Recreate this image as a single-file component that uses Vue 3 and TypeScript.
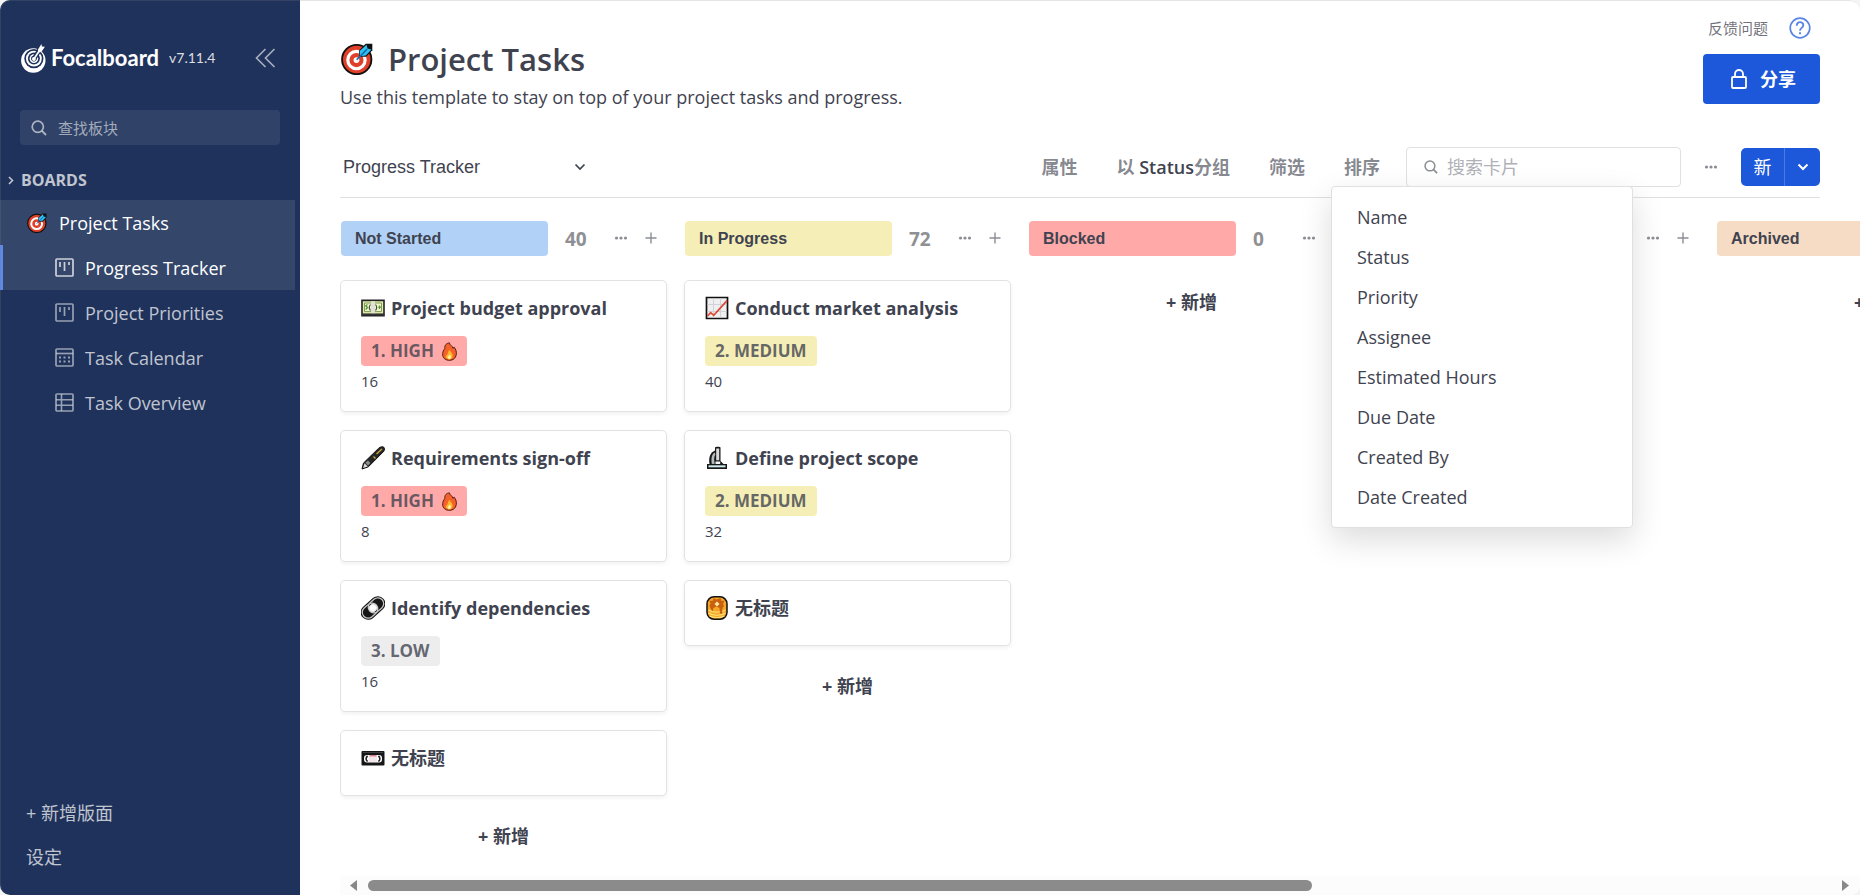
<script setup lang="ts">
import { ref } from 'vue'

type ViewKind = 'board' | 'calendar' | 'table'
interface View { name: string; kind: ViewKind }
interface Badge { text: string; tone: string; fire?: boolean }
interface Card { icon: string; title: string; badge?: Badge; hours?: number }
interface Column { name: string; tone: string; total: number; cards: Card[] }

const views: View[] = [
  { name: 'Progress Tracker', kind: 'board' },
  { name: 'Project Priorities', kind: 'board' },
  { name: 'Task Calendar', kind: 'calendar' },
  { name: 'Task Overview', kind: 'table' },
]
const activeView = ref(0)
const viewName = ref('Progress Tracker')
const boardQuery = ref('')
const cardQuery = ref('')
const sortOpen = ref(true)

const sortFields: string[] = [
  'Name', 'Status', 'Priority', 'Assignee',
  'Estimated Hours', 'Due Date', 'Created By', 'Date Created',
]

const high: Badge = { text: '1. HIGH', tone: 'red', fire: true }
const medium: Badge = { text: '2. MEDIUM', tone: 'yellow' }
const low: Badge = { text: '3. LOW', tone: 'gray' }

const columns: Column[] = [
  {
    name: 'Not Started', tone: 'blue', total: 40,
    cards: [
      { icon: 'money', title: 'Project budget approval', badge: high, hours: 16 },
      { icon: 'pen', title: 'Requirements sign-off', badge: high, hours: 8 },
      { icon: 'link', title: 'Identify dependencies', badge: low, hours: 16 },
      { icon: 'tape', title: '无标题' },
    ],
  },
  {
    name: 'In Progress', tone: 'yellow', total: 72,
    cards: [
      { icon: 'chart', title: 'Conduct market analysis', badge: medium, hours: 40 },
      { icon: 'scope', title: 'Define project scope', badge: medium, hours: 32 },
      { icon: 'pancakes', title: '无标题' },
    ],
  },
  { name: 'Blocked', tone: 'red', total: 0, cards: [] },
  { name: 'Completed', tone: 'green', total: 0, cards: [] },
  { name: 'Archived', tone: 'orange', total: 0, cards: [] },
]
</script>

<template>
  <div class="app">
    <svg class="sprite" width="0" height="0" aria-hidden="true">
      <symbol id="i-target" viewBox="0 0 24 24">
        <circle cx="11.8" cy="12.4" r="11" fill="#e0402a" stroke="#111" stroke-width="1.4" />
        <circle cx="11.6" cy="12.8" r="6.5" fill="none" stroke="#fff" stroke-width="2.4" />
        <circle cx="11.6" cy="12.8" r="2.2" fill="#fff" />
        <path d="M13.500 9.500V5.600L18.500.500h5v5L18.800 10.400h-3.600z" fill="#111" />
        <path d="M14 9.300V6l5.200-4.600.6 2.800 3 .7-4.200 4.400-3 .4z" fill="#2fc0f5" />
        <path d="M11.800 12.600l7.800-8" stroke="#0f6fae" stroke-width="1.200" />
      </symbol>
      <symbol id="i-money" viewBox="0 0 24 24">
        <path d="M1 4.400h22v15.400H1z" fill="#e4efae" stroke="#222" stroke-width="1.600" />
        <path d="M1 18.400h22" stroke="#333" stroke-width="2" />
        <path d="M3.500 7h17v8.600h-17z" fill="#f1f7c4" stroke="#7f9b56" />
        <path d="M10 5.200h4v12h-4z" fill="#dfe2d6" />
        <path d="M9.500 8.500c-1.600 2-1.600 4 0 6M14.500 8.500c1.600 2 1.600 4 0 6" stroke="#4a4a4a" stroke-width="1.200" fill="none" />
        <path d="M6.500 8.500l-1.800 1.300 1.800 1.700-1.800 2M18.500 9.500v3.600M17.300 11.200h2.600" stroke="#50923f" stroke-width="1.200" fill="none" />
      </symbol>
      <symbol id="i-pen" viewBox="0 0 24 24">
        <path d="M1 23l1.500-6L17.500 2.400C19 .6 22 .4 23 1.400s.8 2.800-.6 4.300L7.400 20.800z" fill="#262626" stroke="#111" />
        <path d="M2 22l1.600-4.700 3.200 3.200z" fill="#dcdcdc" />
        <path d="M4.400 16.800L7 14.400l2.400 2.500-2.400 2.500" fill="#8b8f8b" />
        <path d="M12.500 10.500l2 2M15.500 8L21 3" stroke="#d1a243" stroke-width="1.400" />
      </symbol>
      <symbol id="i-link" viewBox="0 0 24 24">
        <g transform="rotate(-42 12 12)" fill="#161616">
          <rect x="-2" y="4.500" width="28" height="15" rx="7.500" />
          <rect x="-.4" y="6.200" width="16.800" height="11.600" rx="5.800" fill="none" stroke="#c5c5c5" stroke-width="1.300" />
          <rect x="7.600" y="6.200" width="16.800" height="11.600" rx="5.800" fill="none" stroke="#c5c5c5" stroke-width="1.300" />
          <circle cx="12" cy="12" r="3.500" fill="#fff" stroke="#eee" />
        </g>
      </symbol>
      <symbol id="i-tape" viewBox="0 0 24 24">
        <rect x=".5" y="5" width="23" height="14.500" rx="1" fill="#161616" />
        <path d="M2 6.500h20" stroke="#404040" />
        <rect x="3" y="9" width="18" height="7.500" rx="3" fill="#fff" />
        <rect x="8" y="9.400" width="8" height="6.600" fill="#f4e6ea" />
        <path d="M8.500 9.800h7" stroke="#cb4f63" />
        <path d="M6.600 10c-2 1.500-2 4 0 5.500M17.400 10c2 1.500 2 4 0 5.500" fill="none" stroke="#222" stroke-width="1.600" />
      </symbol>
      <symbol id="i-chart" viewBox="0 0 24 24">
        <path d="M1.500 1.500h21v21h-21z" fill="#efeff1" stroke="#111" stroke-width="1.700" />
        <path d="M8.500 2.500v19M15.500 2.500v19M2.500 8.500h19M2.500 15.500h19" stroke="#d2d2d8" />
        <path d="M2.500 20l3.200-3.400 3 2.800L22 4.600" fill="none" stroke="#dc4a35" stroke-width="1.700" />
      </symbol>
      <symbol id="i-scope" viewBox="0 0 24 24">
        <path d="M2 18h2.500C3.500 12 5 6.500 10 4.500V1.500C10 .6 15.500.4 15.500 1.500V15l3 3H22v5H2z" fill="#181818" />
        <path d="M11.200 2.500h3v11.800h-3z" fill="#dadada" />
        <path d="M9.700 6.500C6.700 8.500 6 12 6.800 18l3-.2c-1-4-.8-7 .6-9.200z" fill="#b7bcbd" />
        <path d="M10.500 15.500h4.700v2.500h-4.700z" fill="#f2f5f5" />
        <path d="M3.500 19.300h17v2H3.500z" fill="#cdeaf0" />
      </symbol>
      <symbol id="i-pancakes" viewBox="0 0 24 24">
        <rect x="2" y=".8" width="20" height="22.400" rx="7" fill="#f4a725" stroke="#111" stroke-width="1.500" />
        <path d="M3.500 14c4 3 13 3 17 0M3.500 17c4 3 13 3 17 0M4.500 20c4 2 11 2 15 0" stroke="#ffe077" stroke-width="1.200" fill="none" />
        <path d="M4.500 4.500l3 .5 1-3 3 1.500 4-1.500 1 3 3-.5-1.500 3.500 1 2-1.500 2-.5 6-2-.5-.5-5.500-3-1.500-3 1.500-1 3.500-2-3-1-3 1-2z" fill="#c9600f" />
        <path d="M12 5.500l2.500 2.500-2.500 2.500L9.500 8z" fill="#ffe9a0" />
      </symbol>
      <symbol id="i-fire" viewBox="0 0 16 20">
        <path d="M3 7C2.500 3 5 1 8 .8c-.6 2 3.400 3 3.600 5.700L13 5.400c4 5 2.400 11-1 13-3 1.600-7 1.300-9.300-.7C-.2 15 .2 10 3 7z" fill="#f4622a" stroke="#4a1a10" />
        <path d="M8.200 8c.8 2.500 2.400 3 3 5.200.8 3-1 5.200-3.200 5.200S3.500 16.800 4 14c1 .8 1.600 0 1.900-1.600C6.300 10.700 7 9 8.200 8z" fill="#ffb52e" />
        <path d="M8.500 13c1.300 1.800 1.700 5-.5 5s-2.400-2.200-1-3.200z" fill="#fff2a0" />
      </symbol>
      <symbol id="i-dots" viewBox="0 0 14 14">
        <circle cx="2.500" cy="7" r="1.600" /><circle cx="7" cy="7" r="1.600" /><circle cx="11.500" cy="7" r="1.600" />
      </symbol>
      <symbol id="i-search" viewBox="0 0 16 16">
        <circle cx="6.800" cy="6.800" r="5.600" fill="none" stroke="currentColor" stroke-width="1.700" />
        <path d="M10.900 10.900l4.100 4.100" stroke="currentColor" stroke-width="1.900" />
      </symbol>
      <symbol id="i-board" viewBox="0 0 19 19">
        <rect x="1" y="1" width="17" height="17" rx="1" fill="none" stroke="currentColor" stroke-width="1.700" />
        <path d="M5 4v5M9.500 4v9M14 4v3" stroke="currentColor" stroke-width="1.700" />
      </symbol>
      <symbol id="i-calendar" viewBox="0 0 19 19">
        <rect x="1" y="1" width="17" height="17" rx="1" fill="none" stroke="currentColor" stroke-width="1.700" />
        <path d="M1 5.500h17" stroke="currentColor" stroke-width="1.700" />
        <path d="M4 9.500h11M4 13.500h11" stroke="currentColor" stroke-width="2" stroke-dasharray="2 2.500" />
      </symbol>
      <symbol id="i-table" viewBox="0 0 19 19">
        <rect x="1" y="1" width="17" height="17" rx="1" fill="none" stroke="currentColor" stroke-width="1.700" />
        <path d="M1 6.700h17M1 12.300h17M6.500 1v17" stroke="currentColor" stroke-width="1.600" />
      </symbol>
    </svg>

    <aside class="sidebar">
      <header class="brand">
        <svg class="brand-mark" viewBox="0 0 25 29" aria-hidden="true">
          <circle cx="12.300" cy="16.500" r="12.200" fill="#fff" />
          <circle cx="12.900" cy="14.600" r="9.600" fill="#1f325b" />
          <circle cx="12.900" cy="14.600" r="7.900" fill="#fff" />
          <circle cx="12.900" cy="14.600" r="6" fill="#1f325b" />
          <circle cx="12.900" cy="14.600" r="4.300" fill="#fff" />
          <circle cx="12.900" cy="14.600" r="2.800" fill="#1f325b" />
          <path d="M12.900 15L20 3.500" stroke="#1f325b" stroke-width="4.600" />
          <circle cx="12.900" cy="15" r="1.900" fill="#fff" />
          <path d="M12.900 15L20.200 4" stroke="#fff" stroke-width="1.700" />
          <path d="M17 5.500L20.400 0l.5 2.600 3 .2L20.300 8l-3 .4z" fill="#fff" />
        </svg>
        <span class="brand-name">Focalboard</span>
        <span class="brand-version">v7.11.4</span>
        <button class="collapse" type="button" aria-label="Collapse sidebar">
          <svg width="21" height="20" viewBox="0 0 21 20" fill="none" stroke="currentColor" stroke-width="1.700">
            <path d="M10.500 1L1.500 10l9 9M19.500 1l-9 9 9 9" />
          </svg>
        </button>
      </header>

      <label class="find">
        <svg width="16" height="16" aria-hidden="true"><use href="#i-search" /></svg>
        <input v-model="boardQuery" type="text" placeholder="查找板块" aria-label="查找板块">
      </label>

      <button class="category" type="button">
        <svg width="6" height="9" viewBox="0 0 6 9" fill="none" stroke="currentColor" stroke-width="1.600"><path d="M1 1l3.500 3.500L1 8" /></svg>
        BOARDS
      </button>

      <nav class="tree">
        <a class="tree-board" href="#board">
          <svg width="20" height="20" aria-hidden="true"><use href="#i-target" /></svg>
          Project Tasks
        </a>
        <a
          v-for="(view, i) in views" :key="view.name" href="#view"
          class="tree-view" :class="{ active: i === activeView }"
          @click.prevent="activeView = i"
        >
          <svg width="19" height="19" aria-hidden="true"><use :href="'#i-' + view.kind" /></svg>
          {{ view.name }}
        </a>
      </nav>

      <footer class="side-foot">
        <button type="button">+ 新增版面</button>
        <button type="button">设定</button>
      </footer>
    </aside>

    <main class="main">
      <header class="top">
        <div class="heading">
          <h1>
            <svg width="32" height="32" aria-hidden="true"><use href="#i-target" /></svg>
            Project Tasks
          </h1>
          <p>Use this template to stay on top of your project tasks and progress.</p>
        </div>
        <div class="top-side">
          <div class="feedback">
            <a href="#feedback">反馈问题</a>
            <button type="button" aria-label="Help">
              <svg width="22" height="22" viewBox="0 0 22 22" fill="none" stroke="currentColor">
                <circle cx="11" cy="11" r="9.800" stroke-width="1.700" />
                <path d="M7.700 8.800C7.700 3.700 14.400 4.300 14.300 8.300c0 2.600-3.300 2.600-3.300 5.400" stroke-width="1.900" />
                <path d="M11 15.300v2" stroke-width="2" />
              </svg>
            </button>
          </div>
          <button class="share" type="button">
            <svg width="16" height="20" viewBox="0 0 16 20" fill="none" stroke="currentColor" stroke-width="1.800">
              <rect x="1" y="8" width="14" height="11" rx="1" />
              <path d="M4 8V5a4 4 0 0 1 8 0v3" />
            </svg>
            分享
          </button>
        </div>
      </header>

      <div class="toolbar">
        <div class="view-select">
          <input v-model="viewName" type="text" aria-label="View name">
          <button type="button" aria-label="Views">
            <svg width="12" height="8" viewBox="0 0 12 8" fill="none" stroke="currentColor" stroke-width="1.700"><path d="M1.500 1.500L6 6l4.500-4.500" /></svg>
          </button>
        </div>
        <div class="actions">
          <button class="action" type="button">属性</button>
          <button class="action" type="button">以 <b>Status</b>分组</button>
          <button class="action" type="button">筛选</button>
          <div class="sort">
            <button class="action" type="button" :aria-expanded="sortOpen" @click="sortOpen = !sortOpen">排序</button>
            <div v-if="sortOpen" class="menu" role="menu">
              <button v-for="field in sortFields" :key="field" type="button" role="menuitem">{{ field }}</button>
            </div>
          </div>
        </div>
        <label class="card-search">
          <svg width="14" height="14" aria-hidden="true"><use href="#i-search" /></svg>
          <input v-model="cardQuery" type="text" placeholder="搜索卡片" aria-label="搜索卡片">
        </label>
        <button class="more" type="button" aria-label="View options">
          <svg width="14" height="14"><use href="#i-dots" /></svg>
        </button>
        <div class="new">
          <button type="button">新</button>
          <button type="button" aria-label="Templates">
            <svg width="12" height="8" viewBox="0 0 12 8" fill="none" stroke="currentColor" stroke-width="2"><path d="M1.500 1.500L6 6l4.500-4.500" /></svg>
          </button>
        </div>
      </div>

      <div class="board">
        <section v-for="column in columns" :key="column.name" class="column">
          <header class="column-head">
            <h2 :class="column.tone">{{ column.name }}</h2>
            <span class="total">{{ column.total }}</span>
            <button type="button" aria-label="Column options">
              <svg width="14" height="14"><use href="#i-dots" /></svg>
            </button>
            <button type="button" aria-label="Add card">
              <svg width="12" height="12" viewBox="0 0 12 12" stroke="currentColor" stroke-width="1.400"><path d="M6 .5v11M.5 6h11" /></svg>
            </button>
          </header>
          <article v-for="(card, i) in column.cards" :key="i" class="card">
            <h3>
              <svg width="24" height="24" aria-hidden="true"><use :href="'#i-' + card.icon" /></svg>
              {{ card.title }}
            </h3>
            <div v-if="card.badge" class="props">
              <span class="badge" :class="card.badge.tone">
                {{ card.badge.text }}
                <svg v-if="card.badge.fire" width="15" height="19" aria-hidden="true"><use href="#i-fire" /></svg>
              </span>
              <span class="hours">{{ card.hours }}</span>
            </div>
          </article>
          <button class="add" type="button">+ 新增</button>
        </section>
      </div>

      <div class="scrollbar" aria-hidden="true">
        <svg width="7" height="11" viewBox="0 0 7 11"><path d="M7 0v11L0 5.500z" /></svg>
        <div class="track"><div class="thumb"></div></div>
        <svg width="7" height="11" viewBox="0 0 7 11"><path d="M0 0v11l7-5.500z" /></svg>
      </div>
    </main>
  </div>
</template>

<style>
html,
body {
  background: #f4f4f4;
}
</style>

<style scoped>
* {
  box-sizing: border-box;
}

button,
input {
  border: 0;
  padding: 0;
  margin: 0;
  background: none;
  color: inherit;
  font: inherit;
}

button {
  cursor: pointer;
}

a {
  color: inherit;
  text-decoration: none;
}

svg {
  flex: none;
  display: block;
}

.sprite {
  position: absolute;
}

.app {
  position: relative;
  display: flex;
  height: 100vh;
  overflow: hidden;
  border-radius: 10px;
  background: #fff;
  color: #3f4350;
  font: 18px/24px "Open Sans", "Noto Sans CJK SC", sans-serif;
}

/* window edge */
.app::after {
  content: "";
  position: absolute;
  inset: 0;
  border: solid rgba(130, 130, 130, 0.2);
  border-width: 1px 0 0 1px;
  border-radius: 10px;
  pointer-events: none;
}

.sidebar {
  flex: none;
  display: flex;
  flex-direction: column;
  width: 300px;
  background: #1f325b;
  color: rgba(255, 255, 255, 0.72);
}

.brand {
  display: flex;
  align-items: center;
  height: 110px;
  padding: 6px 24px 0 21px;
}

.brand-mark {
  width: 25px;
  height: 29px;
}

.brand-name {
  margin-left: 5px;
  color: #fff;
  font: 700 22px/24px Lato, sans-serif;
}

.brand-version {
  margin-left: 10px;
  font: 14px/24px Lato, sans-serif;
  color: rgba(255, 255, 255, 0.85);
}

.collapse {
  margin-left: auto;
  color: rgba(255, 255, 255, 0.6);
}

.find {
  display: flex;
  align-items: center;
  gap: 11px;
  height: 35px;
  margin: 0 20px;
  padding: 0 11px;
  border-radius: 4px;
  background: rgba(255, 255, 255, 0.08);
  color: rgba(255, 255, 255, 0.6);
  font-size: 15px;
}

.find input {
  flex: 1;
  min-width: 0;
  outline: 0;
}

.find input::placeholder {
  color: rgba(255, 255, 255, 0.56);
}

.category {
  display: flex;
  align-items: center;
  gap: 7px;
  height: 40px;
  margin-top: 15px;
  padding-left: 8px;
  font-size: 16px;
  font-weight: 700;
}

.tree {
  display: flex;
  flex-direction: column;
}

.tree-board,
.tree-view {
  display: flex;
  align-items: center;
  gap: 11px;
  height: 45px;
  margin-right: 5px;
  padding-left: 55px;
}

.tree-board {
  gap: 12px;
  padding-left: 27px;
  background: rgba(255, 255, 255, 0.1);
  color: #fff;
}

.tree-view.active {
  padding-left: 52px;
  border-left: 3px solid #5d89ea;
  background: rgba(255, 255, 255, 0.1);
  color: #fff;
}

.tree-view svg {
  opacity: 0.75;
}

.side-foot {
  display: flex;
  flex-direction: column;
  margin-top: auto;
  padding-bottom: 16px;
}

.side-foot button {
  height: 44px;
  padding-left: 26px;
  text-align: left;
}

.main {
  flex: 1;
  min-width: 0;
  display: flex;
  flex-direction: column;
  padding-left: 40px;
}

.top {
  display: flex;
  justify-content: space-between;
  padding-right: 40px;
}

.heading {
  padding-top: 40px;
}

h1,
h2,
h3,
p {
  margin: 0;
}

h1 {
  display: flex;
  align-items: center;
  gap: 15px;
  font-size: 31px;
  font-weight: 600;
  line-height: 38px;
}

h1 svg {
  margin-left: 1px;
}

.heading p {
  margin-top: 7px;
}

.top-side {
  display: flex;
  flex-direction: column;
  align-items: flex-end;
  padding-top: 16px;
}

.feedback {
  display: flex;
  align-items: center;
  gap: 21px;
  padding-right: 9px;
  color: rgba(63, 67, 80, 0.75);
  font-size: 15px;
}

.feedback button {
  color: #5c86e4;
}

.share {
  display: flex;
  align-items: center;
  gap: 13px;
  height: 50px;
  margin-top: 14px;
  padding: 0 24px 0 28px;
  border-radius: 4px;
  background: #1c58d9;
  color: #fff;
  font-weight: 700;
}

.toolbar {
  display: flex;
  align-items: center;
  height: 61px;
  margin: 28px 40px 0 0;
  border-bottom: 1px solid #dfe0e2;
}

.view-select {
  display: flex;
  align-items: center;
  padding-left: 3px;
  font: 18px/24px "Liberation Sans", Arial, sans-serif;
}

.view-select input {
  width: 231px;
  outline: 0;
}

.actions {
  display: flex;
  margin-left: auto;
  padding-right: 13px;
  gap: 13px;
}

.action {
  height: 38px;
  padding: 0 13px;
  color: rgba(63, 67, 80, 0.64);
  font-weight: 700;
}

.action b {
  color: #3f4350;
  font-weight: 600;
}

.sort {
  position: relative;
}

.menu {
  position: absolute;
  z-index: 5;
  top: 100%;
  left: 0;
  display: flex;
  flex-direction: column;
  width: 302px;
  padding: 10px 0;
  border: 1px solid #dfe0e2;
  border-radius: 4px;
  background: #fff;
  box-shadow: 0 12px 32px rgba(0, 0, 0, 0.14);
}

.menu button {
  height: 40px;
  padding: 0 25px;
  text-align: left;
}

.card-search {
  display: flex;
  align-items: center;
  gap: 9px;
  flex: 0 1 275px;
  min-width: 0;
  height: 40px;
  padding: 0 17px;
  border: 1px solid #dfe0e2;
  border-radius: 4px;
  color: #8b8d95;
}

.card-search input {
  flex: 1;
  min-width: 0;
  outline: 0;
}

.card-search input::placeholder {
  color: #b0b1b6;
}

.more,
.column-head button {
  display: grid;
  place-items: center;
  width: 30px;
  height: 30px;
  color: #8b8d95;
  fill: currentColor;
}

.more {
  margin: 0 15px;
}

.new {
  display: flex;
  height: 38px;
  border-radius: 5px;
  background: #1c58d9;
  color: #fff;
}

.new button {
  display: grid;
  place-items: center;
  width: 43px;
}

.new button + button {
  width: 36px;
  border-left: 1px solid #4a7be2;
}

.board {
  flex: 1;
  min-height: 0;
  display: flex;
  gap: 17px;
  padding-top: 23px;
  overflow: hidden;
}

.column {
  flex: none;
  display: flex;
  flex-direction: column;
  width: 327px;
}

.column-head {
  display: flex;
  align-items: center;
  height: 35px;
  margin-bottom: 24px;
  padding-left: 1px;
}

.column-head h2 {
  width: 207px;
  padding-left: 14px;
  border-radius: 4px;
  font: 700 16px/35px "Liberation Sans", Arial, sans-serif;
}

.total {
  width: 58px;
  padding-left: 17px;
  color: #8f9094;
  font-size: 19px;
  font-weight: 700;
}

.column-head button svg {
  margin-top: -2px;
}

.blue {
  background: #b1d1f6;
}

.yellow {
  background: #f5eeb6;
}

.red {
  background: #ffa9a9;
}

.green {
  background: #c7eebc;
}

.orange {
  background: #f6dcc4;
}

.gray {
  background: #ededed;
}

.card {
  margin-bottom: 18px;
  padding: 13px 20px 9px;
  border: 1px solid #e1e2e4;
  border-radius: 5px;
  box-shadow: 0 2px 4px rgba(0, 0, 0, 0.06);
}

.card h3 {
  display: flex;
  align-items: center;
  gap: 6px;
  margin-bottom: 14px;
  font-size: 18px;
  font-weight: 700;
  line-height: 28px;
}

.props {
  display: flex;
  flex-direction: column;
  align-items: flex-start;
  padding-bottom: 6px;
}

.badge {
  display: flex;
  align-items: center;
  gap: 8px;
  height: 30px;
  padding: 0 10px;
  border-radius: 4px;
  color: rgba(63, 67, 80, 0.8);
  font-size: 17px;
  font-weight: 700;
}

.hours {
  font-size: 15px;
  line-height: 30px;
}

.add {
  height: 44px;
  font-weight: 700;
}

.scrollbar {
  display: flex;
  align-items: center;
  gap: 11px;
  height: 19px;
  padding: 0 11px 0 10px;
  background: #fcfcfc;
  fill: #888;
}

.track {
  flex: 1;
}

.thumb {
  width: calc(100% * 20 / 31);
  height: 11px;
  border-radius: 6px;
  background: #8b8b8b;
}
</style>
